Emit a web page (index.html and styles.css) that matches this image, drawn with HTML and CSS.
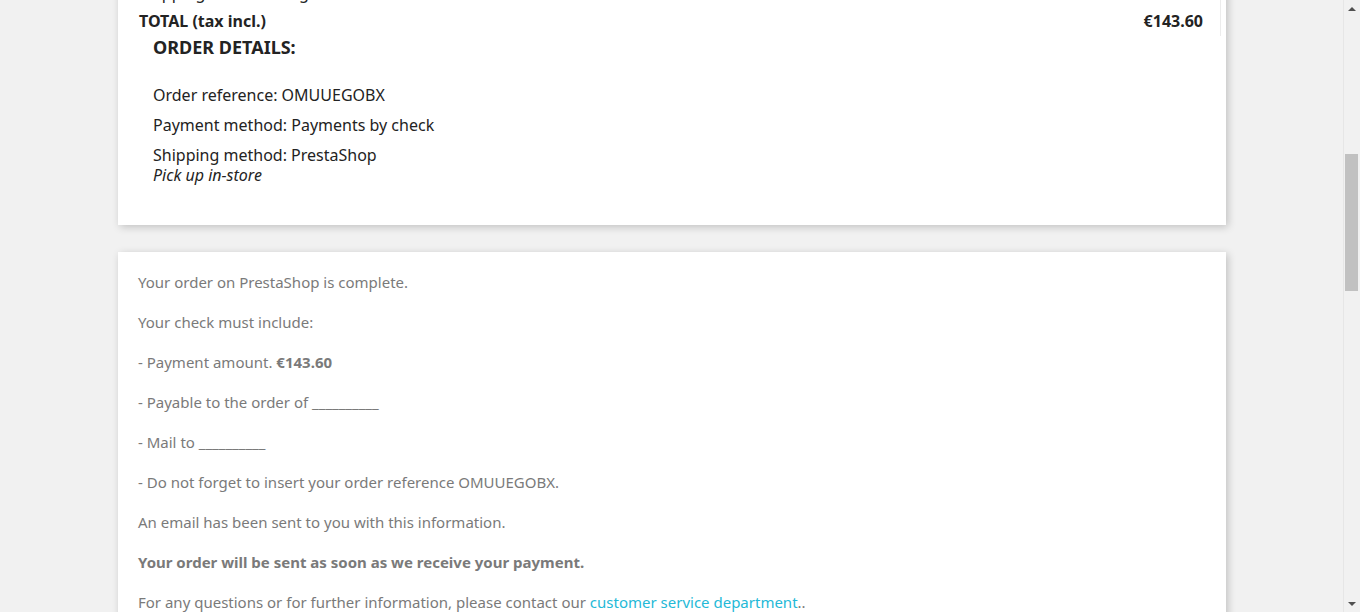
FILE: index.html
```html
<!DOCTYPE html>
<html lang="en">
<head>
<meta charset="utf-8">
<title>Order confirmation</title>
<link rel="stylesheet" href="styles.css">
</head>
<body>
<div class="viewport">
  <main class="page">
    <div class="content">
      <section class="card card-order">
        <div class="order-items">
          <div class="total-row"><span>Subtotal</span><span>€143.60</span></div>
          <div class="total-row"><span>Shipping and handling</span><span>Free</span></div>
          <div class="total-row total-value"><span>TOTAL (tax incl.)</span><span>€143.60</span></div>
        </div>
        <div class="order-details">
          <h3 class="details-title">Order details:</h3>
          <ul class="details-list">
            <li>Order reference: OMUUEGOBX</li>
            <li>Payment method: Payments by check</li>
            <li>Shipping method: PrestaShop<br><em>Pick up in-store</em></li>
          </ul>
        </div>
      </section>

      <section class="card card-payment">
        <p>Your order on PrestaShop is complete.</p>
        <p>Your check must include:</p>
        <p>- Payment amount. <strong>€143.60</strong></p>
        <p>- Payable to the order of __________</p>
        <p>- Mail to __________</p>
        <p>- Do not forget to insert your order reference OMUUEGOBX.</p>
        <p>An email has been sent to you with this information.</p>
        <p><strong>Your order will be sent as soon as we receive your payment.</strong></p>
        <p>For any questions or for further information, please contact our <a href="#">customer service department</a>..</p>
      </section>
    </div>
  </main>
  <div class="scrollbar">
    <div class="sb-button"><span class="arrow-up"></span></div>
    <div class="sb-track"><div class="sb-thumb"></div></div>
    <div class="sb-button"><span class="arrow-down"></span></div>
  </div>
</div>
</body>
</html>
```

FILE: styles.css
```css
* {
  box-sizing: border-box;
}

html, body {
  margin: 0;
  padding: 0;
}

body {
  background: #f1f1f1;
  font-family: "Noto Sans", "DejaVu Sans", sans-serif;
  color: #232323;
  line-height: 1.25;
}

.viewport {
  display: flex;
  width: 1360px;
  height: 612px;
  overflow: hidden;
}

.page {
  flex: 1;
  overflow: hidden;
  padding: 0 117px 0 118px;
}

.content {
  margin-top: -50px;
  display: flex;
  flex-direction: column;
  gap: 27px;
}

.card {
  background: #fff;
  box-shadow: 2px 2px 8px 0 rgba(0, 0, 0, 0.2);
}

/* ---- order summary card ---- */
.order-items {
  margin-right: 5px;
  border-right: 1px solid #ececec;
  padding: 0 17px 0 21px;
}

.total-row {
  display: flex;
  justify-content: space-between;
  font-size: 16px;
  line-height: 20px;
  font-weight: 400;
  padding: 4px 0 4.5px;
}

.total-row.total-value {
  font-weight: 700;
}

.order-details {
  padding: 0 35px 30px 35px;
}

.details-title {
  margin: 0 0 26.5px;
  font-size: 18px;
  line-height: 22.5px;
  font-weight: 700;
  text-transform: uppercase;
  color: #232323;
}

.details-list {
  list-style: none;
  margin: 0;
  padding: 0;
  font-size: 16px;
  line-height: 20px;
}

.details-list li {
  margin-bottom: 10px;
}

/* ---- payment card ---- */
.card-payment {
  padding: 20px 20px 20px 20px;
}

.card-payment p {
  margin: 0 0 20px;
  font-size: 15px;
  line-height: 20px;
  color: #7a7a7a;
}

.card-payment strong {
  font-weight: 700;
}

.card-payment a {
  color: #24b9d7;
  text-decoration: none;
}

/* ---- scrollbar ---- */
.scrollbar {
  width: 17px;
  flex: none;
  display: flex;
  flex-direction: column;
  background: #f1f1f1;
  box-shadow: inset 1px 0 0 #e6e6e6;
}

.sb-button {
  height: 17px;
  flex: none;
  display: flex;
  align-items: center;
  justify-content: center;
  padding-left: 1px;
}

.arrow-up {
  width: 0;
  height: 0;
  border-left: 4px solid transparent;
  border-right: 4px solid transparent;
  border-bottom: 4px solid #505050;
}

.arrow-down {
  width: 0;
  height: 0;
  border-left: 4px solid transparent;
  border-right: 4px solid transparent;
  border-top: 4px solid #505050;
}

.sb-track {
  flex: 1;
  padding: 137px 2px 0 2px;
}

.sb-thumb {
  height: 137px;
  background: #c1c1c1;
}
```
